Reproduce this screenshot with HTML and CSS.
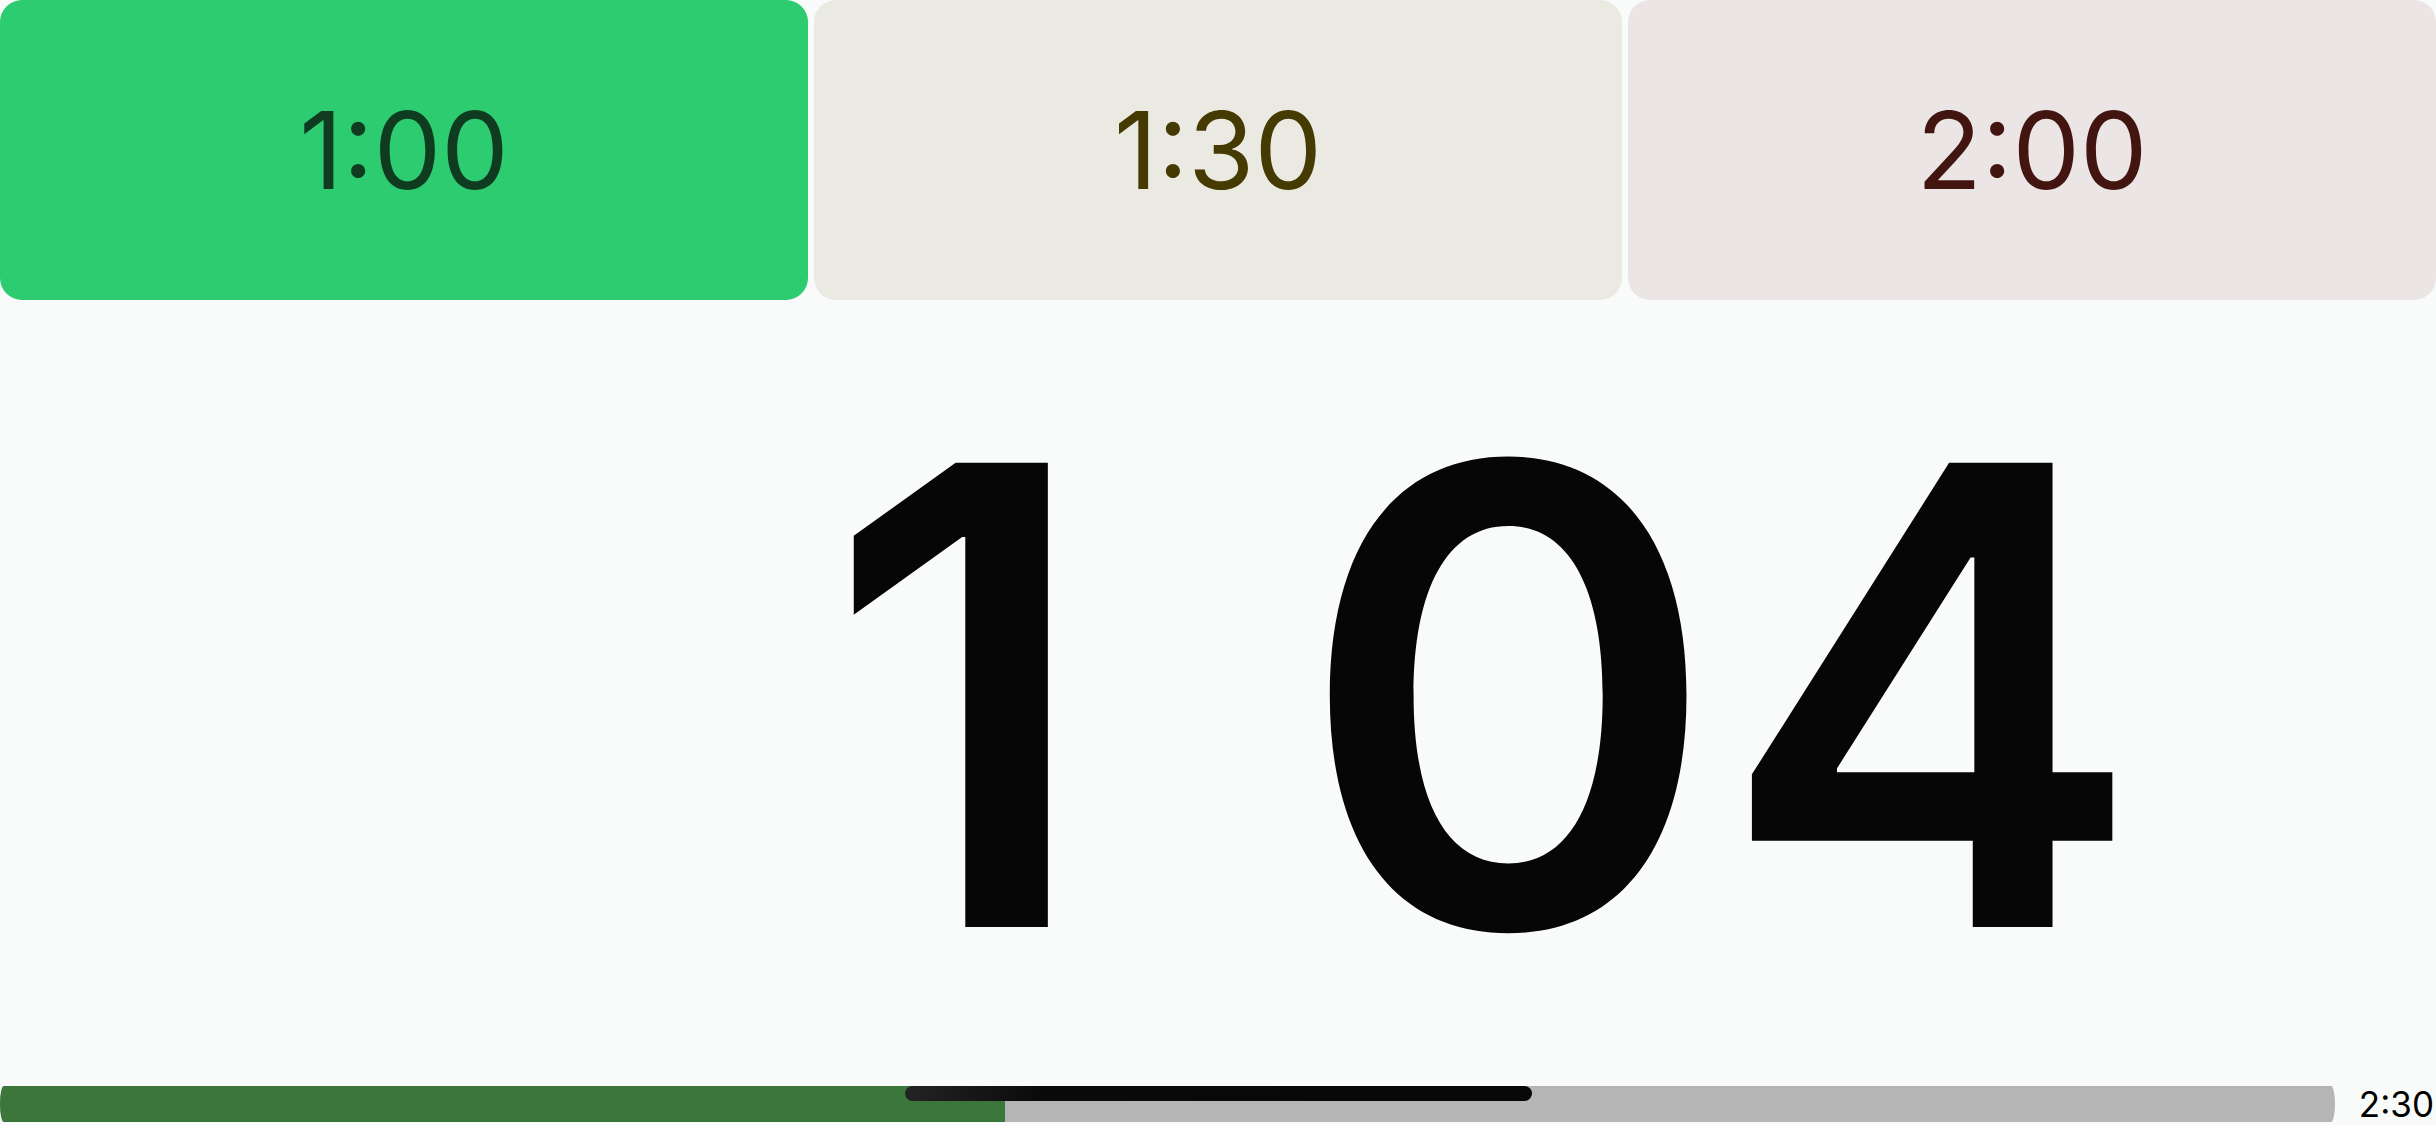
FILE: index.html
```html
<!DOCTYPE html>
<html lang="en">
<head>
    <meta charset="UTF-8">
    <meta name="viewport" content="width=device-width, initial-scale=1.0">
    <title>Timer</title>
    <link rel="stylesheet" href="styles.css">
</head>
<body>
    <div class="presets">
        <button class="preset preset-green">1:00</button>
        <button class="preset preset-sand">1:30</button>
        <button class="preset preset-rose">2:00</button>
    </div>

    <div class="display">
        <div class="count">1<span class="blink">:</span>04</div>
    </div>

    <div class="footer">
        <div class="track">
            <div class="fill"></div>
            <div class="thumb"></div>
        </div>
        <span class="total">2:30</span>
    </div>
</body>
</html>
```

FILE: styles.css
```css
* {
    margin: 0;
    padding: 0;
    box-sizing: border-box;
    font-family: Inter, "Noto Sans", sans-serif;
}
body {
    background: #f9fbfa;
    width: 2436px;
    height: 1125px;
    display: flex;
    flex-direction: column;
    overflow: hidden;
}
.presets {
    display: flex;
    gap: 6px;
    height: 300px;
}
.preset {
    flex: 1;
    border: none;
    border-radius: 22px;
    font-size: 107px;
    font-weight: 400;
    line-height: 1;
    cursor: pointer;
}
.preset-green {
    background: #2ecc71;
    color: #0f3c21;
}
.preset-sand {
    background: #eaeae2;
    color: #453a02;
}
.preset-rose {
    background: #ebe5e5;
    color: #431511;
}
.display {
    flex: 1;
    display: flex;
    align-items: center;
    justify-content: center;
    padding-left: 532px;
    padding-top: 4px;
}
.count {
    font-size: 638px;
    font-weight: 600;
    line-height: 1;
    color: #060606;
}
.blink {
    visibility: hidden;
}
.footer {
    display: flex;
    align-items: center;
    gap: 24px;
    height: 36px;
    margin-bottom: 3px;
}
.track {
    position: relative;
    flex: 1;
    height: 36px;
    background: #b5b5b5;
    border-radius: 4px / 18px;
    overflow: hidden;
}
.fill {
    width: 1005px;
    height: 100%;
    background: #3b763b;
}
.thumb {
    position: absolute;
    top: 0;
    left: 905px;
    width: 627px;
    height: 15px;
    border-radius: 8px;
    background: linear-gradient(to right, #232323, #0a0a0a 22%, #070707);
}
.total {
    font-size: 35px;
    line-height: 1;
    color: #000;
    padding-right: 2px;
}
```
